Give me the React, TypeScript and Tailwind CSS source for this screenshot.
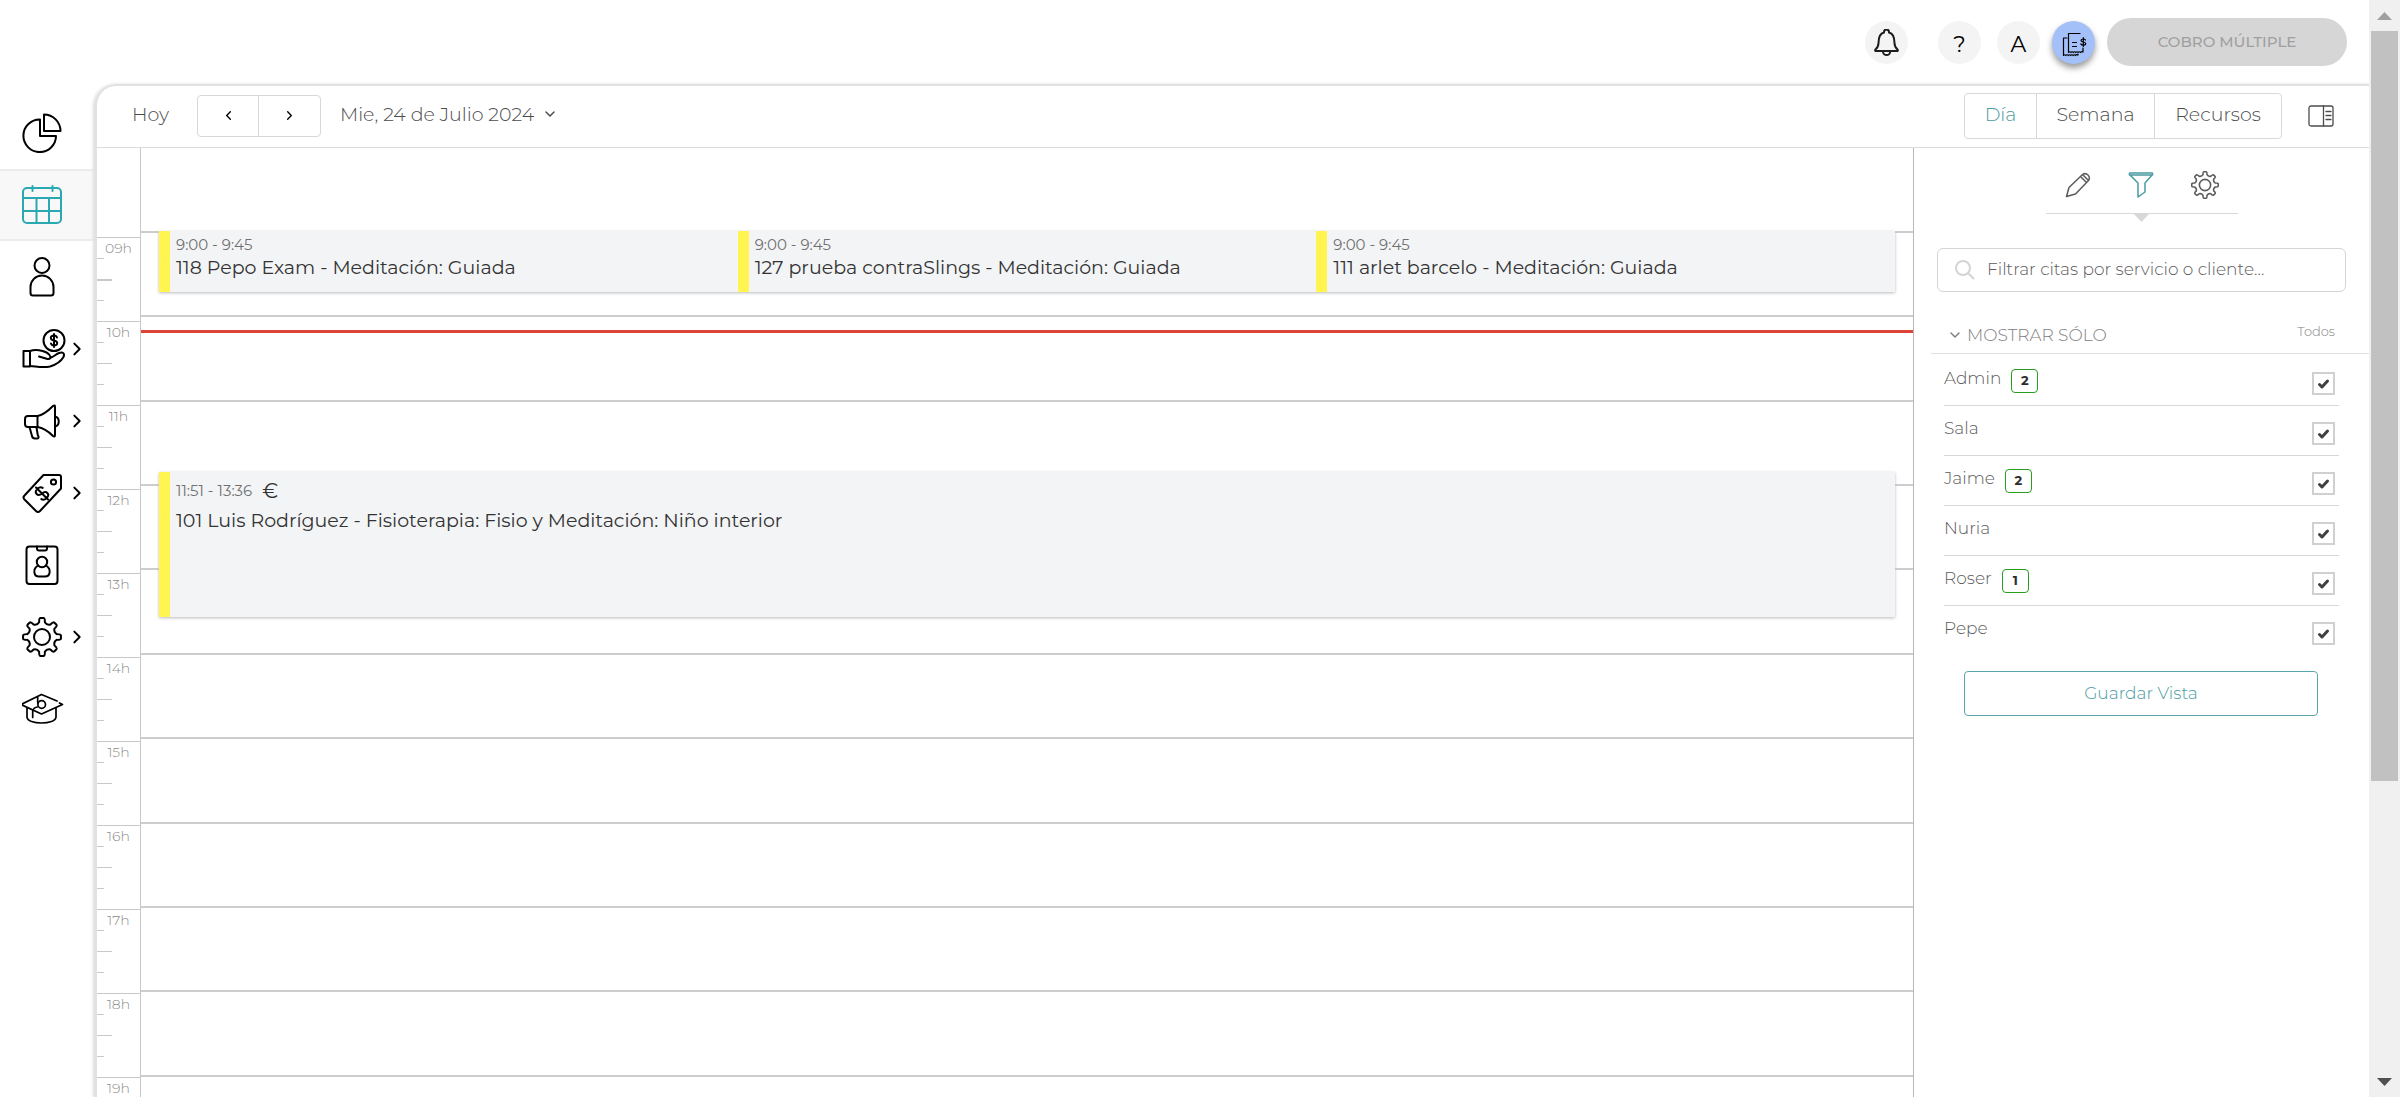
import { useState } from 'react';
import type { ReactNode } from 'react';

interface IconProps {
  className?: string;
  strokeWidth?: number;
}

interface SvgProps extends IconProps {
  viewBox?: string;
  children: ReactNode;
}

function Svg({ className, strokeWidth = 2, viewBox = '0 0 40 40', children }: SvgProps) {
  return (
    <svg
      className={className}
      viewBox={viewBox}
      fill="none"
      stroke="currentColor"
      strokeWidth={strokeWidth}
      strokeLinecap="round"
      strokeLinejoin="round"
      aria-hidden="true"
    >
      {children}
    </svg>
  );
}

// Eight-tooth gear outline, centred on 20,20
function gearPath() {
  const point = (angle: number, radius: number) => {
    const rad = (angle * Math.PI) / 180;
    return `${(20 + radius * Math.sin(rad)).toFixed(2)} ${(20 - radius * Math.cos(rad)).toFixed(2)}`;
  };
  let d = '';
  for (let i = 0; i < 8; i++) {
    const a = i * 45;
    d += `${i === 0 ? 'M' : 'L'}${point(a - 11, 15)}`;
    d += `Q${point(a - 9, 19)} ${point(a - 5, 19)}L${point(a + 5, 19)}`;
    d += `Q${point(a + 9, 19)} ${point(a + 11, 15)}`;
    d += `Q${point(a + 22.5, 12.5)} ${point(a + 34, 15)}`;
  }
  return `${d}Z`;
}

const GEAR = gearPath();

const PieIcon = () => (
  <Svg className="w-10 h-10">
    <path d="M18 6.5V23h16A16.3 16.3 0 1 1 18 6.5Z" />
    <path d="M22 1.5A16.5 16.5 0 0 1 38.5 18H22Z" />
  </Svg>
);

const CalendarIcon = () => (
  <Svg className="w-10 h-10">
    <rect x="1" y="3" width="38" height="35" rx="4" />
    <path d="M10.5 1v5M30.5 1v5M1 13h38M1 26h38M14.5 13v25M27 13v25" />
  </Svg>
);

const PersonIcon = () => (
  <Svg className="w-10 h-10">
    <circle cx="20" cy="8.5" r="7.5" />
    <path d="M8.5 36v-6a11.5 11.5 0 0 1 23 0v6q0 2.5-2.5 2.5H11q-2.5 0-2.5-2.5Z" />
  </Svg>
);

const HandCoinIcon = () => (
  <Svg className="w-11 h-10" viewBox="0 0 44 40">
    <circle cx="32" cy="11.5" r="10.5" />
    <path d="M35 8.500c-.5-1.500-1.500-2-3-2-4.500 0-4 4.500 0 5s4.500 5 0 5c-1.500 0-2.500-.5-3-2M32 5v13" />
    <path d="M1.500 22h6.500v15.500h-6.500z" />
    <path d="M8 22C12 20.500 17 21 20.500 22C24 23 26 24 27.500 26C29.500 28.500 28 30.500 25.500 30L17 27.500" />
    <path d="M29 28.500C33 27 34 25 37 24C41 22.500 43 24.500 41.500 28C38 34 33 36 28 37.500C21 39 15 37.500 8 37" />
  </Svg>
);

const MegaphoneIcon = () => (
  <Svg className="w-10 h-10">
    <path d="M15.500 15H6q-3 0-3 3v5q0 3 3 3h9.500Z" />
    <path d="M15.500 15C22 14 27 9 31 5q2-1.500 2 1v28q0 2.500-2 1C27 31 22 27 15.500 26M33 15.500c5 1 5 9 0 10M7.500 26l2.500 9q.5 2.500 3 2.500h2q2 0 1.500-2-1-1.500-1-3l-1-6" />
  </Svg>
);

const TagIcon = () => (
  <Svg className="w-10 h-10">
    <path d="M21.500 2H37q2 0 2 2v11.500L18 38q-2 2-4 0L2.500 26.500q-2-2 0-4Z" />
    <circle cx="31.500" cy="9" r="2.600" />
    <path
      transform="rotate(-45 20 20.500)"
      d="M24.500 17c-.5-2-2-3-4.500-3-5.500 0-5.500 6 0 6.500s5.500 6.500 0 6.500c-2.500 0-4-1-4.500-3M20 12v17"
    />
  </Svg>
);

const BadgeIcon = () => (
  <Svg className="w-10 h-10">
    <rect x="4.500" y="1.500" width="31" height="37.500" rx="3" />
    <path d="M15 1.500v2q0 2 2 2h6q2 0 2-2v-2" />
    <circle cx="20" cy="17" r="5.200" />
    <path d="M16 20.500c-6 4-4 11 1 11h6c5 0 7-7 1-11" />
  </Svg>
);

const GearIcon = ({ className = 'w-10 h-10', strokeWidth }: IconProps) => (
  <Svg className={className} strokeWidth={strokeWidth}>
    <path d={GEAR} />
    <circle cx="20" cy="20" r="8" />
  </Svg>
);

const CapIcon = () => (
  <Svg className="w-11 h-10" viewBox="0 0 44 40" strokeWidth={1.7}>
    <path d="M35 12L19.500 5.500L-1 15.500L19.500 25L40.500 15.500L37.500 14" />
    <path d="M5 19v9c0 8 29 8 29 0v-9M10.700 28.500v-6q0-3.500 4.500-4.500" />
    <path d="M15.700 8.500v5.500" />
    <circle cx="19.700" cy="15.500" r="3.800" />
  </Svg>
);

const BellIcon = () => (
  <Svg className="w-7 h-7" viewBox="0 0 28 28">
    <path d="M2.500 22h22q.8-.7 0-1.500-3-2.500-3-6.500c0-5-1-9.500-5.500-10.500V3a2.500 2.500 0 0 0-5 0v.5C6.500 4.500 5.500 9 5.500 14q0 4-3 6.500-.8.800 0 1.500ZM10 22.500a3.600 3.600 0 0 0 7.200 0" />
  </Svg>
);

const BillsIcon = () => (
  <Svg className="w-7 h-7" viewBox="0 0 28 28" strokeWidth={1.2}>
    <path d="M20 4.500H8.500v19q1.200-1.500 2.400 0 1.200-1.500 2.400 0 1.200-1.500 2.400 0 1.200-1.500 2.400 0 1.200-1.500 2.400 0 1.200-1.500 2.500-.5v-4M12.500 13.500h4M12.500 17.500h4" />
    <path d="M7 9H3.500v17.500q1.200-1.500 2.400 0 1.200-1.500 2.400 0 1.200-1.500 2.400 0 1.200-1.500 2.400 0 1.200-1.500 2.400 0 1.200-1.500 2.400-.5v-1" />
    <path d="M25.500 11c-1-1.600-4.500-1.200-4.500.5 0 2 4.800 1 4.800 3.200 0 1.800-4 2-5 .2M23.300 8.500v9" />
  </Svg>
);

const Chevron = ({ className, direction }: { className?: string; direction: 'left' | 'right' | 'down' }) => (
  <Svg className={className} viewBox="0 0 12 12" strokeWidth={1.5}>
    {direction === 'left' && <path d="M8 2L4 6L8 10" />}
    {direction === 'right' && <path d="M4 2L8 6L4 10" />}
    {direction === 'down' && <path d="M2 4L6 8L10 4" />}
  </Svg>
);

const NAV_ITEMS = [
  { label: 'Informes', icon: <PieIcon /> },
  { label: 'Agenda', icon: <CalendarIcon />, active: true },
  { label: 'Clientes', icon: <PersonIcon /> },
  { label: 'Caja', icon: <HandCoinIcon />, expandable: true },
  { label: 'Marketing', icon: <MegaphoneIcon />, expandable: true },
  { label: 'Ventas', icon: <TagIcon />, expandable: true },
  { label: 'Personal', icon: <BadgeIcon /> },
  { label: 'Ajustes', icon: <GearIcon />, expandable: true },
  { label: 'Academia', icon: <CapIcon /> },
];

const HOURS = ['09h', '10h', '11h', '12h', '13h', '14h', '15h', '16h', '17h', '18h', '19h'];

const MORNING = [
  '118 Pepo Exam - Meditación: Guiada',
  '127 prueba contraSlings - Meditación: Guiada',
  '111 arlet barcelo - Meditación: Guiada',
];

const STAFF = [
  { name: 'Admin', count: 2 },
  { name: 'Sala' },
  { name: 'Jaime', count: 2 },
  { name: 'Nuria' },
  { name: 'Roser', count: 1 },
  { name: 'Pepe' },
];

function Sidebar() {
  return (
    <nav className="w-[94px] shrink-0 pt-[13px]">
      {NAV_ITEMS.map((item) => (
        <a
          key={item.label}
          href="#"
          aria-label={item.label}
          className={
            item.active
              ? 'flex h-[72px] items-center border-y-2 border-[#ececec] bg-[#f8f8f8] pl-[22px] text-[#2aa9b3]'
              : 'flex h-[72px] items-center pl-[22px] text-black'
          }
        >
          <span className="w-[47px]">{item.icon}</span>
          {item.expandable && <Chevron direction="right" className="w-4 h-4" />}
        </a>
      ))}
    </nav>
  );
}

function TopBar() {
  return (
    <header className="flex h-[84px] shrink-0 items-start justify-end pr-[22px] pt-[18px]">
      <button className="mt-[3px] mr-[30px] flex size-[43px] items-center justify-center rounded-full bg-[#f4f4f4] text-[#1c1c1c]" aria-label="Avisos">
        <BellIcon />
      </button>
      <button className="mt-[3px] mr-4 size-[43px] rounded-full bg-[#f4f4f4] pt-1 text-[22px] text-black">?</button>
      <button className="mt-[3px] mr-3 size-[43px] rounded-full bg-[#f4f4f4] pt-1 text-[22px] text-black">A</button>
      <button className="mt-[3px] mr-3 flex size-[43px] items-center justify-center rounded-full bg-[#a4c0f8] text-black shadow-[0_4px_6px_#999999]" aria-label="Cobros">
        <BillsIcon />
      </button>
      <button className="h-12 w-[240px] rounded-full bg-[#d6d6d6] text-[15px] font-medium text-[#a0a0a0]">
        COBRO MÚLTIPLE
      </button>
    </header>
  );
}

function Toolbar() {
  return (
    <div className="flex h-[62px] shrink-0 items-center border-b border-[#dcdcdc] pb-0.5 pl-[35px] pr-[35px] text-[19px] font-light text-[#4c4c4c]">
      <button className="w-[65px] text-left">Hoy</button>
      <div className="flex h-[42px] divide-x divide-[#d8d8d8] rounded border border-[#d8d8d8]">
        <button className="flex w-[61px] items-center justify-center text-black" aria-label="Anterior">
          <Chevron direction="left" className="size-[11px]" />
        </button>
        <button className="flex w-[61px] items-center justify-center text-black" aria-label="Siguiente">
          <Chevron direction="right" className="size-[11px]" />
        </button>
      </div>
      <button className="ml-[19px] flex items-center gap-[10px]">
        Mie, 24 de Julio 2024
        <Chevron direction="down" className="mb-1 size-3" />
      </button>
      <div className="ml-auto mr-[26px] flex h-[46px] divide-x divide-[#d8d8d8] rounded border border-[#d8d8d8]">
        <button className="w-[72px] text-[#4a9ba2]">Día</button>
        <button className="w-[118px]">Semana</button>
        <button className="w-[126px]">Recursos</button>
      </div>
      <button aria-label="Panel lateral">
        <Svg className="h-[22px] w-[26px]" viewBox="0 0 26 22" strokeWidth={1.3}>
          <rect x="1" y="1" width="24" height="20" rx="2" />
          <path d="M15.500 1v20M18 6.500h5M18 10.500h5M18 14.500h5" />
        </Svg>
      </button>
    </div>
  );
}

function HourColumn() {
  return (
    <div className="w-11 shrink-0 border-r border-[#c8c8c8] pt-[89px] text-center text-[14px] font-light text-[#8c8c8c]">
      {HOURS.map((hour, i) => (
        <div key={hour} className="h-[84px]">
          <div className="h-[21px] border-t border-[#c8c8c8] pt-px leading-[18px]">{hour}</div>
          <div className="h-[21px]">
            <div className="w-[7px] border-t border-[#c8c8c8]" />
          </div>
          <div className="h-[21px]">
            <div className={i === 0 ? 'w-[15px] border-t-2 border-[#c8c8c8]' : 'w-[15px] border-t border-[#c8c8c8]'} />
          </div>
          <div className="h-[21px]">
            <div className="w-[7px] border-t border-[#c8c8c8]" />
          </div>
        </div>
      ))}
    </div>
  );
}

function DayCalendar() {
  return (
    <section className="relative min-w-0 flex-1 pt-[83px]">
      <div className="grid h-[928px] grid-rows-11">
        {HOURS.map((hour) => (
          <div key={hour} className="border-t-2 border-[#cdcdcd]" />
        ))}
      </div>

      {/* Appointments */}
      <div className="absolute inset-x-[18px] top-[83px] grid h-[61px] grid-cols-3 shadow-[0_1px_3px_#bbbbbb]">
        {MORNING.map((title) => (
          <article key={title} className="border-l-[11px] border-[#fff450] bg-[#f3f4f6] pl-[6px]">
            <p className="pt-1 text-[15px] leading-5 text-[#707070]">9:00 - 9:45</p>
            <p className="text-[19px] leading-[26px] text-[#333333]">{title}</p>
          </article>
        ))}
      </div>
      <article className="absolute inset-x-[18px] top-[324px] h-[145px] border-l-[11px] border-[#fff450] bg-[#f3f4f6] pl-[6px] shadow-[0_1px_3px_#bbbbbb]">
        <p className="flex items-center pt-[9px] text-[15px] leading-5 text-[#707070]">
          11:51 - 13:36 <span className="ml-[10px] text-[20px] text-[#333333]">€</span>
        </p>
        <p className="pt-[7px] text-[19px] leading-[26px] text-[#333333]">
          101 Luis Rodríguez - Fisioterapia: Fisio y Meditación: Niño interior
        </p>
      </article>

      {/* Current time */}
      <div className="absolute inset-x-0 top-[182px] h-[3px] bg-[#dc4437]" />
    </section>
  );
}

function FilterPanel() {
  const [hidden, setHidden] = useState<string[]>([]);

  const toggle = (name: string) => {
    setHidden((prev) => (prev.includes(name) ? prev.filter((n) => n !== name) : [...prev, name]));
  };

  return (
    <aside className="w-[456px] shrink-0 border-l border-[#b8b8b8] text-[#5c5c5c]">
      <div className="relative mx-auto flex h-[66px] w-[192px] items-center justify-between border-b border-[#d8d8d8] px-[19px] pt-2">
        <button aria-label="Editar">
          <Svg className="size-[26px]" viewBox="0 0 26 26" strokeWidth={1.5}>
            <path d="M1.500 24.500L4 15.500L17.500 2.500q3-2 5.500.5t.5 5.500L10.500 22ZM15.500 4.500l6 6M17.500 2.500l6 6" />
          </Svg>
        </button>
        <button aria-label="Filtrar" className="text-[#4a9ba2]">
          <Svg className="size-[26px]" viewBox="0 0 26 26" strokeWidth={1.5}>
            <path d="M2 1h22q1 0 .5 1.500L17 11v9l-7 5V11L1.500 2.500Q1 1 2 1ZM1.500 3h23" />
          </Svg>
        </button>
        <button aria-label="Configurar">
          <GearIcon className="size-[28px]" strokeWidth={2.3} />
        </button>
        <Svg className="absolute left-[87px] top-[65px] h-[9px] w-[17px] text-[#d8d8d8]" viewBox="0 0 17 9">
          <path d="M0 0h17L8.500 9Z" fill="currentColor" stroke="none" />
        </Svg>
      </div>

      <label className="mx-[23px] mt-[34px] flex h-11 items-center rounded-md border border-[#d4d4d4] pl-[17px]">
        <Svg className="size-5 text-[#d4d4d4]" viewBox="0 0 20 20">
          <circle cx="8" cy="8" r="7" />
          <path d="M13 13l5.500 5.500" />
        </Svg>
        <input
          type="text"
          aria-label="Filtrar citas"
          placeholder="Filtrar citas por servicio o cliente..."
          className="ml-3 flex-1 text-[17px] font-light outline-none placeholder:text-[#5c5c5c]"
        />
      </label>

      <div className="ml-[17px] mt-8 flex h-[30px] items-start justify-between border-b border-[#e0e0e0] pl-[18px] pr-[34px] text-[#808080]">
        <button className="flex items-center gap-[6px] pt-[3px] text-[17px] font-light leading-4">
          <Chevron direction="down" className="size-3" />
          MOSTRAR SÓLO
        </button>
        <button className="text-[13px] font-light leading-[14px]">Todos</button>
      </div>

      <ul className="mx-[30px] divide-y divide-[#d8d8d8] pt-0.5">
        {STAFF.map(({ name, count }) => (
          <li key={name}>
            <label className="flex h-[49px] items-start">
              <span className="pt-[10px] text-[17px] font-light leading-6">{name}</span>
              {count && (
                <span className="ml-[10px] mt-[13px] h-6 w-[27px] rounded border border-[#2a9d1f] text-center text-[13px] font-bold leading-5 text-[#2c2c2c]">
                  {count}
                </span>
              )}
              <span className="ml-auto mr-1 mt-4 grid">
                <input
                  type="checkbox"
                  checked={!hidden.includes(name)}
                  onChange={() => toggle(name)}
                  className="peer col-start-1 row-start-1 size-[23px] appearance-none border-2 border-[#d0d0d0]"
                />
                <Svg
                  className="pointer-events-none invisible col-start-1 row-start-1 size-[23px] text-[#404040] peer-checked:visible"
                  viewBox="0 0 23 23"
                  strokeWidth={3}
                >
                  <path d="M7.500 12.500l2.500 2.500l5.500-6" />
                </Svg>
              </span>
            </label>
          </li>
        ))}
      </ul>

      <button className="mx-[50px] mt-4 block h-[45px] w-[354px] rounded border border-[#5ba7ad] text-[17px] font-light text-[#4a9ba2]">
        Guardar Vista
      </button>
    </aside>
  );
}

function PageScrollbar() {
  return (
    <div className="flex h-full w-[31px] shrink-0 flex-col items-center bg-[#f0f0f0]">
      <div className="flex h-[31px] items-center">
        <Svg className="h-2 w-[15px] text-[#a0a0a0]" viewBox="0 0 15 8">
          <path d="M0 8h15L7.500 0Z" fill="currentColor" stroke="none" />
        </Svg>
      </div>
      <div className="flex w-[27px] flex-1 flex-col">
        <div className="h-[72.5%] bg-[#c1c1c1]" />
      </div>
      <div className="flex h-[31px] items-center">
        <Svg className="h-2 w-[15px] text-[#505050]" viewBox="0 0 15 8">
          <path d="M0 0h15L7.500 8Z" fill="currentColor" stroke="none" />
        </Svg>
      </div>
    </div>
  );
}

export default function App() {
  return (
    <div className="flex h-screen overflow-hidden bg-white font-['Montserrat',Inter,sans-serif]">
      <div className="flex min-w-0 flex-1 flex-col">
        <TopBar />
        <div className="flex min-h-0 flex-1">
          <Sidebar />
          <main className="flex min-w-0 flex-1 flex-col rounded-tl-[22px] border-l-3 border-t-2 border-[#e2e2e2] shadow-[-1px_0_3px_#dddddd]">
            <Toolbar />
            <div className="flex min-h-0 flex-1 overflow-hidden">
              <HourColumn />
              <DayCalendar />
              <FilterPanel />
            </div>
          </main>
        </div>
      </div>
      <PageScrollbar />
    </div>
  );
}
